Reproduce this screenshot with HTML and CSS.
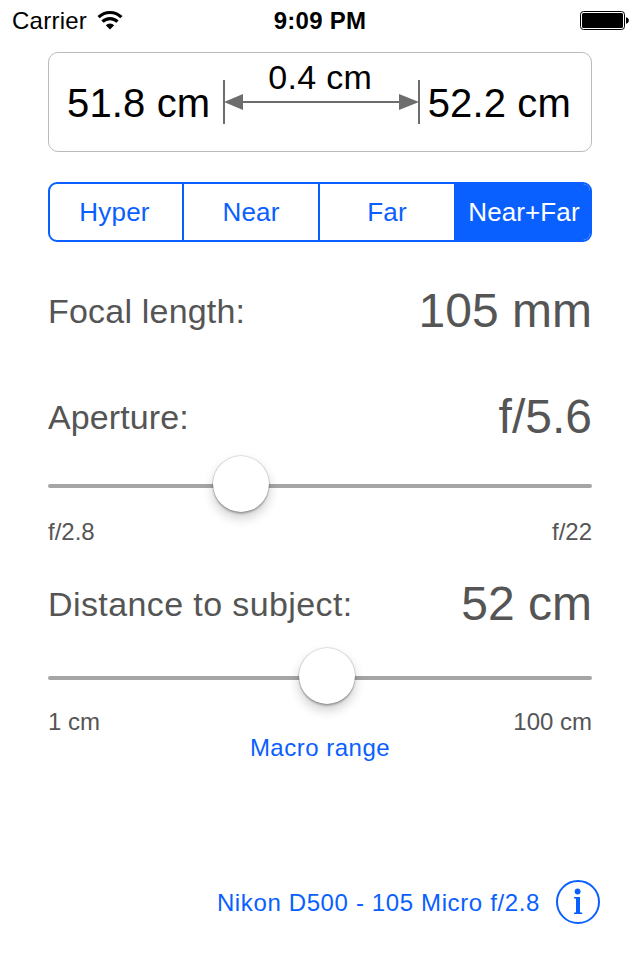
FILE: index.html
```html
<!DOCTYPE html>
<html lang="en">
<head>
<meta charset="utf-8">
<title>Depth of Field</title>
<link rel="stylesheet" href="styles.css">
</head>
<body>
<div class="screen">
  <header class="status">
    <div class="carrier">
      <span>Carrier</span>
      <svg class="wifi" width="26" height="20" viewBox="0 0 26 20">
        <g fill="none" stroke="#000" stroke-width="3.2">
          <path d="M1.6 7.2A16.2 16.2 0 0 1 24.4 7.2"/>
          <path d="M5.5 11.7A10.6 10.6 0 0 1 20.5 11.7"/>
        </g>
        <path d="M13 19.4L8.8 15.2A6 6 0 0 1 17.2 15.2Z"/>
      </svg>
    </div>
    <div class="clock">9:09 PM</div>
    <svg class="battery" width="50" height="20" viewBox="0 0 50 20">
      <rect x=".5" y=".5" width="44" height="18" rx="3" fill="none" stroke="#000"/>
      <rect x="2" y="2" width="41" height="15" rx="1.5"/>
      <path d="M46 6.3C49.8 6.8 49.8 12.2 46 12.7Z"/>
    </svg>
  </header>

  <section class="result">
    <span class="limit near">51.8 cm</span>
    <div class="range">
      <span class="depth">0.4 cm</span>
      <svg class="arrow" width="198" height="44" viewBox="0 0 198 44">
        <g fill="#6d6d6d">
          <rect x="1" width="2" height="44"/>
          <rect x="196" width="2" height="44"/>
          <rect x="18" y="21" width="162" height="2"/>
          <path d="M2 22L21 14V30Z"/>
          <path d="M197 22L177 14V30Z"/>
        </g>
      </svg>
    </div>
    <span class="limit far">52.2 cm</span>
  </section>

  <nav class="segments">
    <span class="segment first">Hyper</span>
    <span class="segment">Near</span>
    <span class="segment">Far</span>
    <span class="segment selected">Near+Far</span>
  </nav>

  <section class="field focal">
    <span class="label">Focal length:</span>
    <span class="value mm">105 mm</span>
  </section>

  <section class="field aperture">
    <span class="label tight">Aperture:</span>
    <span class="value">f/5.6</span>
  </section>
  <div class="slider"><span class="thumb at-aperture"></span></div>
  <div class="limits"><span>f/2.8</span><span>f/22</span></div>

  <section class="field distance">
    <span class="label loose">Distance to subject:</span>
    <span class="value">52 cm</span>
  </section>
  <div class="slider low"><span class="thumb at-distance"></span></div>
  <div class="limits low"><span>1 cm</span><span>100 cm</span></div>
  <div class="macro">Macro range</div>

  <footer class="camera">
    <span class="name">Nikon D500 - 105 Micro f/2.8</span>
    <svg class="info" width="44" height="44" viewBox="0 0 44 44">
      <circle cx="22" cy="22" r="21" fill="none" stroke="#0a60ff" stroke-width="2"/>
      <circle cx="21.6" cy="11.5" r="2.9" fill="#0a60ff"/>
      <path fill="#0a60ff" d="M18 17H24V32.2L26.2 32.8V34H18V32.8L20 32.2V18.8L18 18.2Z"/>
    </svg>
  </footer>
</div>
</body>
</html>
```

FILE: styles.css
```css
* { box-sizing: border-box; }

body {
  margin: 0;
  background: #fff;
  font-family: "Liberation Sans", Arial, sans-serif;
  color: #555;
}

.screen {
  display: flex;
  flex-direction: column;
  width: 640px;
  height: 960px;
  padding: 0 48px;
  overflow: hidden;
  white-space: nowrap;
}

.status {
  display: grid;
  grid-template-columns: 1fr auto 1fr;
  height: 42px;
  margin: 0 -36px 10px;
  align-items: center;
  font-size: 24px;
  letter-spacing: 0.25px;
  line-height: 42px;
  color: #000;
}

.carrier { display: flex; align-items: center; gap: 10px; }
.wifi { margin-top: -3px; }
.clock { font-weight: bold; }
.battery { justify-self: end; margin: -1px -2px 0 0; }

.result {
  display: flex;
  height: 100px;
  flex: none;
  padding: 0 20px 0 18px;
  border: 1px solid #bbb;
  border-radius: 10px;
  justify-content: space-between;
  color: #000;
}

.limit { font-size: 40px; line-height: 101px; letter-spacing: 0.15px; }
.range { display: flex; flex-direction: column; align-items: center; margin-left: auto; margin-right: 8px; }
.depth { height: 27px; font-size: 34px; line-height: 48px; letter-spacing: 0.3px; padding-right: 1px; }
.arrow { display: block; }

.segments {
  display: grid;
  grid-template-columns: 134px 136px 136px 138px;
  flex: none;
  height: 60px;
  margin-top: 30px;
  border: 2px solid #0a60ff;
  border-radius: 9px;
  overflow: hidden;
  font-size: 26px;
  line-height: 56px;
  letter-spacing: 0.2px;
  text-align: center;
  color: #0a60ff;
}

.segment { border-right: 2px solid #0a60ff; }
.first { padding-right: 3px; }
.selected { background: #0a60ff; color: #fff; letter-spacing: 0.1px; }

.field {
  display: flex;
  flex: none;
  height: 60px;
  justify-content: space-between;
  align-items: center;
}

.focal { margin-top: 39px; }
.aperture { margin-top: 46px; }
.distance { margin-top: 28px; }

.label { font-size: 34px; line-height: 60px; letter-spacing: 0.2px; }
.label.tight { letter-spacing: 0.1px; }
.label.loose { letter-spacing: 0.4px; }
.value { font-size: 48px; line-height: 60px; }

.slider {
  position: relative;
  flex: none;
  height: 4px;
  margin-top: 37px;
  border-radius: 2px;
  background: #a5a5a5;
}

.slider.low { margin-top: 42px; }

.thumb {
  position: absolute;
  top: -28px;
  width: 56px;
  height: 56px;
  border-radius: 50%;
  background: #fff;
  box-shadow: 0 0 1px 0.5px rgba(0, 0, 0, 0.2), 0 2px 2px rgba(0, 0, 0, 0.22), 0 6px 12px rgba(0, 0, 0, 0.2);
}

.at-aperture { left: 165px; }
.at-distance { left: 251px; }

.limits {
  display: flex;
  flex: none;
  height: 28px;
  margin-top: 30px;
  justify-content: space-between;
  font-size: 24px;
  line-height: 28px;
}

.limits.low { height: 27px; margin-top: 28px; }

.macro {
  height: 26px;
  font-size: 24px;
  line-height: 26px;
  letter-spacing: 0.5px;
  text-align: center;
  color: #0a60ff;
}

.camera {
  display: flex;
  justify-content: flex-end;
  align-items: center;
  gap: 16px;
  height: 44px;
  margin: 119px -8px 0 0;
  font-size: 24px;
  letter-spacing: 0.63px;
  color: #0a60ff;
}

.name { padding-top: 2px; }
```
